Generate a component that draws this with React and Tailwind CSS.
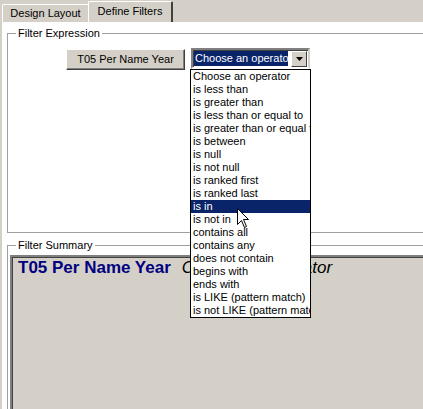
const OPERATORS = [
  'Choose an operator',
  'is less than',
  'is greater than',
  'is less than or equal to',
  'is greater than or equal to',
  'is between',
  'is null',
  'is not null',
  'is ranked first',
  'is ranked last',
  'is in',
  'is not in',
  'contains all',
  'contains any',
  'does not contain',
  'begins with',
  'ends with',
  'is LIKE (pattern match)',
  'is not LIKE (pattern match)',
];

// ── Mouse pointer ─────────────────────────────────────────────────────
function Pointer() {
  return (
    <svg width="13" height="21" viewBox="0 0 13 21" className="absolute left-[237px] top-[208px]">
      <path d="M0.5 0.5 L0.5 16.5 L4.5 12.5 L7.5 19.5 L9.5 18.5 L6.5 11.5 L11.5 11.5 Z" fill="#fff" stroke="#000" strokeWidth="1" />
    </svg>
  );
}

// ── Group box with caption on its top edge ────────────────────────────
function GroupBox({ title, className, children }) {
  return (
    <div className={`relative border border-[#a0a0a0] ${className}`}>
      <span className="absolute -top-[8px] left-[8px] bg-white px-[2px] leading-[14px]">{title}</span>
      {children}
    </div>
  );
}

export default function App() {
  return (
    <div className="relative w-[423px] h-[409px] overflow-hidden bg-[#d4d0c8] text-[11px] text-black font-['Liberation_Sans',Arial,sans-serif]">
      {/* Tabs */}
      <div className="flex items-end h-[22px] pl-[2px]">
        <div className="h-[18px] w-[86px] flex items-center justify-center border-t border-l border-white rounded-tl-[2px] bg-[#d4d0c8]">
          Design Layout
        </div>
        <div className="h-[21px] w-[85px] flex items-center justify-center border-t border-l border-white border-r-2 border-r-[#404040] rounded-t-[2px] bg-[#d4d0c8] pb-[2px]">
          Define Filters
        </div>
      </div>

      {/* Tab page */}
      <div className="ml-[2px] h-[387px] bg-white border-l border-white pl-[4px] pt-[11px]">
        <GroupBox title="Filter Expression" className="w-[440px] h-[200px]">
          <div className="flex items-start pt-[15px] pl-[58px] gap-[6px]">
            <button className="h-[21px] w-[119px] bg-[#d4d0c8] border border-t-white border-l-white border-r-[#404040] border-b-[#404040] shadow-[inset_-1px_-1px_0_#808080]">
              T05 Per Name Year
            </button>
            <div className="-mt-[1px] h-[21px] w-[119px] flex items-center border-2 border-t-[#808080] border-l-[#808080] border-r-[#d4d0c8] border-b-white bg-white shadow-[inset_1px_1px_0_#404040] pl-[1px] pr-[1px]">
              <span className="flex-1 h-[15px] leading-[15px] bg-[#0a246a] text-white pl-[1px] mr-[3px] whitespace-nowrap overflow-hidden">
                Choose an operator
              </span>
              <span className="w-[16px] h-[16px] flex items-center justify-center bg-[#d4d0c8] border border-t-white border-l-white border-r-[#404040] border-b-[#404040]">
                <svg width="7" height="4" viewBox="0 0 7 4"><path d="M0 0H7L3.5 4Z" fill="#000" /></svg>
              </span>
            </div>
          </div>
        </GroupBox>

        <GroupBox title="Filter Summary" className="mt-[12px] w-[440px] h-[200px] border-b-0">
          <div className="ml-[2px] mt-[9px] h-[200px] bg-[#d4d0c8] border-t-2 border-l-2 border-t-[#808080] border-l-[#808080] shadow-[inset_1px_1px_0_#404040] pl-[6px] pt-[1px] whitespace-nowrap text-[17px] leading-[20px]">
            <span className="font-bold text-[#000080]">T05 Per Name Year</span>
            <span className="italic ml-[11px]">Choose an operator</span>
          </div>
        </GroupBox>
      </div>

      {/* Open dropdown list */}
      <div className="absolute left-[190px] top-[69px] w-[121px] bg-white border border-black overflow-hidden">
        {OPERATORS.map((op) => (
          <div
            key={op}
            className={`h-[13px] leading-[13px] pl-[2px] whitespace-nowrap ${op === 'is in' ? 'bg-[#0a246a] text-white' : ''}`}
          >
            {op}
          </div>
        ))}
      </div>

      <Pointer />
    </div>
  );
}
